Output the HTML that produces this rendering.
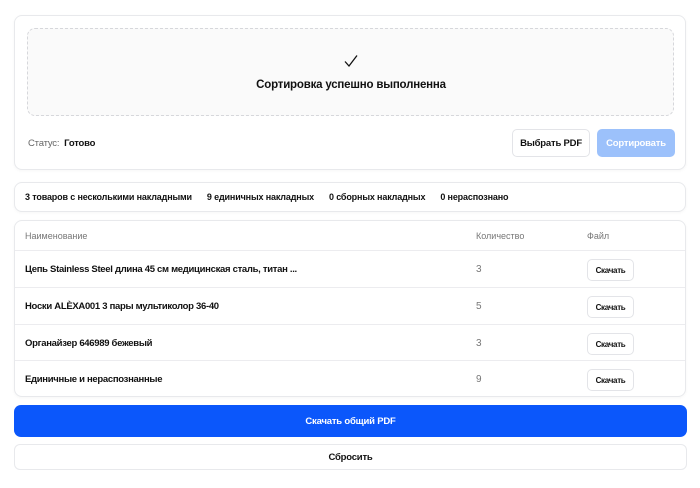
<!DOCTYPE html>
<html><head><meta charset="utf-8"><style>
*{box-sizing:border-box;margin:0;padding:0}
body{width:700px;height:488px;background:#fff;font-family:"Liberation Sans",sans-serif;color:#111;position:relative;overflow:hidden}
.card{position:absolute;left:14px;width:672px;border:1px solid #e8e9ec;border-radius:8px;background:#fff;box-shadow:0 1px 3px rgba(0,0,0,.04)}
.abs{position:absolute}
.btn{position:absolute;border:1px solid #e3e4e8;border-radius:5px;background:#fff;display:flex;align-items:center;justify-content:center;font-weight:bold;letter-spacing:-.2px}
.row{position:absolute;left:0;right:0;border-top:1px solid #ececef;height:37px}
.row .n{position:absolute;left:10px;top:13px;font-size:9.5px;font-weight:bold;letter-spacing:-.3px;white-space:nowrap}
.row .q{position:absolute;left:461px;top:13px;font-size:10px;color:#777}
.row .b{left:572px;top:8px;width:47px;height:22px;font-size:8px;letter-spacing:-.3px}
</style></head><body>
<div class="card" style="top:15px;height:155px">
  <div class="abs" style="left:12px;top:12px;width:647px;height:88px;border:1px dashed #d6d7db;border-radius:8px;background:#fafafa"></div>
  <svg class="abs" style="left:328px;top:38px" width="16" height="14" viewBox="0 0 16 14"><path d="M2 7.5 L6 12 L14 1.5" fill="none" stroke="#111" stroke-width="1.3"/></svg>
  <div class="abs" style="left:0;width:672px;top:63px;text-align:center;font-size:11.5px;font-weight:bold;letter-spacing:-.2px">Сортировка успешно выполненна</div>
  <div class="abs" style="left:13px;top:122px;font-size:9.5px;color:#666;letter-spacing:-.2px">Статус:&nbsp; <b style="color:#111">Готово</b></div>
  <div class="btn" style="left:497px;top:113px;width:78px;height:28px;font-size:9.5px">Выбрать PDF</div>
  <div class="btn" style="left:582px;top:113px;width:78px;height:28px;font-size:9.5px;background:#9cc1fb;border-color:#9cc1fb;color:#fff">Сортировать</div>
</div>
<div class="card" style="top:182px;height:30px">
  <div class="abs" style="left:10px;top:9px;font-size:9px;font-weight:bold;letter-spacing:-.15px;white-space:nowrap">3 товаров с несколькими накладными<span style="display:inline-block;width:15px"></span>9 единичных накладных<span style="display:inline-block;width:15px"></span>0 сборных накладных<span style="display:inline-block;width:15px"></span>0 нераспознано</div>
</div>
<div class="card" style="top:220px;height:177px">
  <div class="abs" style="left:10px;top:10px;font-size:9px;color:#777">Наименование</div>
  <div class="abs" style="left:461px;top:10px;font-size:9px;color:#777">Количество</div>
  <div class="abs" style="left:572px;top:10px;font-size:9px;color:#777">Файл</div>
  <div class="row" style="top:29px"><div class="n">Цепь Stainless Steel длина 45 см медицинская сталь, титан ...</div><div class="q">3</div><div class="btn b">Скачать</div></div>
  <div class="row" style="top:66px"><div class="n">Носки ALÈXA001 3 пары мультиколор 36-40</div><div class="q">5</div><div class="btn b">Скачать</div></div>
  <div class="row" style="top:103px"><div class="n">Органайзер 646989 бежевый</div><div class="q">3</div><div class="btn b">Скачать</div></div>
  <div class="row" style="top:139px"><div class="n">Единичные и нераспознанные</div><div class="q">9</div><div class="btn b">Скачать</div></div>
</div>
<div class="abs" style="left:14px;top:405px;width:673px;height:32px;background:#0b57fb;border-radius:7px;color:#fff;font-weight:bold;font-size:9.5px;letter-spacing:-.2px;display:flex;align-items:center;justify-content:center">Скачать общий PDF</div>
<div class="abs" style="left:14px;top:444px;width:673px;height:26px;border:1px solid #e8e9ec;border-radius:6px;font-weight:bold;font-size:9.5px;letter-spacing:-.2px;display:flex;align-items:center;justify-content:center">Сбросить</div>
</body></html>
